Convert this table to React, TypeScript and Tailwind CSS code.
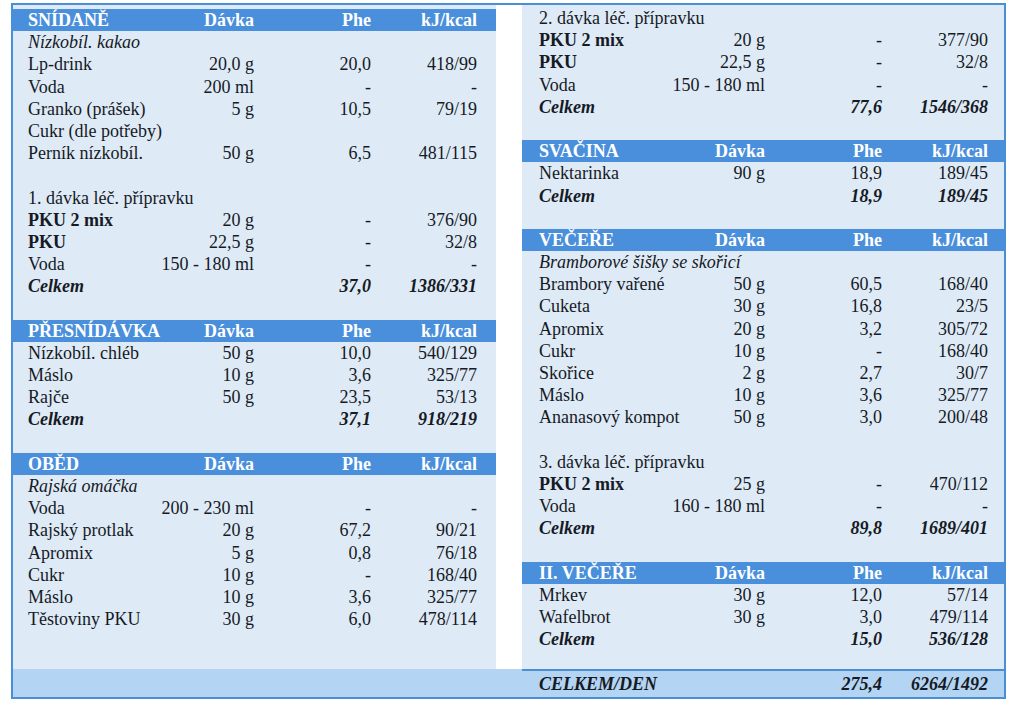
import React from "react";

type Row =
  | { t: "h"; name: string }
  | { t: "i"; name: string }
  | { t: "p"; name: string }
  | { t: "blank" }
  | { t: "n" | "b" | "c"; name: string; d?: string; p?: string; k?: string };

const left: Row[] = [
  { t: "h", name: "SNÍDANĚ" },
  { t: "i", name: "Nízkobíl. kakao" },
  { t: "n", name: "Lp-drink", d: "20,0 g", p: "20,0", k: "418/99" },
  { t: "n", name: "Voda", d: "200 ml", p: "-", k: "-" },
  { t: "n", name: "Granko (prášek)", d: "5 g", p: "10,5", k: "79/19" },
  { t: "p", name: "Cukr (dle potřeby)" },
  { t: "n", name: "Perník nízkobíl.", d: "50 g", p: "6,5", k: "481/115" },
  { t: "blank" },
  { t: "p", name: "1. dávka léč. přípravku" },
  { t: "b", name: "PKU 2 mix", d: "20 g", p: "-", k: "376/90" },
  { t: "b", name: "PKU", d: "22,5 g", p: "-", k: "32/8" },
  { t: "n", name: "Voda", d: "150 - 180 ml", p: "-", k: "-" },
  { t: "c", name: "Celkem", p: "37,0", k: "1386/331" },
  { t: "blank" },
  { t: "h", name: "PŘESNÍDÁVKA" },
  { t: "n", name: "Nízkobíl. chléb", d: "50 g", p: "10,0", k: "540/129" },
  { t: "n", name: "Máslo", d: "10 g", p: "3,6", k: "325/77" },
  { t: "n", name: "Rajče", d: "50 g", p: "23,5", k: "53/13" },
  { t: "c", name: "Celkem", p: "37,1", k: "918/219" },
  { t: "blank" },
  { t: "h", name: "OBĚD" },
  { t: "i", name: "Rajská omáčka" },
  { t: "n", name: "Voda", d: "200 - 230 ml", p: "-", k: "-" },
  { t: "n", name: "Rajský protlak", d: "20 g", p: "67,2", k: "90/21" },
  { t: "n", name: "Apromix", d: "5 g", p: "0,8", k: "76/18" },
  { t: "n", name: "Cukr", d: "10 g", p: "-", k: "168/40" },
  { t: "n", name: "Máslo", d: "10 g", p: "3,6", k: "325/77" },
  { t: "n", name: "Těstoviny PKU", d: "30 g", p: "6,0", k: "478/114" },
];

const right: Row[] = [
  { t: "p", name: "2. dávka léč. přípravku" },
  { t: "b", name: "PKU 2 mix", d: "20 g", p: "-", k: "377/90" },
  { t: "b", name: "PKU", d: "22,5 g", p: "-", k: "32/8" },
  { t: "n", name: "Voda", d: "150 - 180 ml", p: "-", k: "-" },
  { t: "c", name: "Celkem", p: "77,6", k: "1546/368" },
  { t: "blank" },
  { t: "h", name: "SVAČINA" },
  { t: "n", name: "Nektarinka", d: "90 g", p: "18,9", k: "189/45" },
  { t: "c", name: "Celkem", p: "18,9", k: "189/45" },
  { t: "blank" },
  { t: "h", name: "VEČEŘE" },
  { t: "i", name: "Bramborové šišky se skořicí" },
  { t: "n", name: "Brambory vařené", d: "50 g", p: "60,5", k: "168/40" },
  { t: "n", name: "Cuketa", d: "30 g", p: "16,8", k: "23/5" },
  { t: "n", name: "Apromix", d: "20 g", p: "3,2", k: "305/72" },
  { t: "n", name: "Cukr", d: "10 g", p: "-", k: "168/40" },
  { t: "n", name: "Skořice", d: "2 g", p: "2,7", k: "30/7" },
  { t: "n", name: "Máslo", d: "10 g", p: "3,6", k: "325/77" },
  { t: "n", name: "Ananasový kompot", d: "50 g", p: "3,0", k: "200/48" },
  { t: "blank" },
  { t: "p", name: "3. dávka léč. přípravku" },
  { t: "b", name: "PKU 2 mix", d: "25 g", p: "-", k: "470/112" },
  { t: "n", name: "Voda", d: "160 - 180 ml", p: "-", k: "-" },
  { t: "c", name: "Celkem", p: "89,8", k: "1689/401" },
  { t: "blank" },
  { t: "h", name: "II. VEČEŘE" },
  { t: "n", name: "Mrkev", d: "30 g", p: "12,0", k: "57/14" },
  { t: "n", name: "Wafelbrot", d: "30 g", p: "3,0", k: "479/114" },
  { t: "c", name: "Celkem", p: "15,0", k: "536/128" },
];

function TableRow({ row, side }: { row: Row; side: "l" | "r" }) {
  const pad = side === "l" ? "pl-[15px] pr-[19px]" : "pl-[17px] pr-[16px]";
  const base = `grid grid-cols-[126px_100px_117px_106px] items-center h-[22.2px] leading-[22.2px] whitespace-nowrap ${pad}`;
  if (row.t === "blank") return <div className="h-[22.2px]" />;
  if (row.t === "h")
    return (
      <div className={`${base} bg-[#4a8fdb] text-white font-bold`}>
        <div>{row.name}</div>
        <div className="text-right">Dávka</div>
        <div className="text-right">Phe</div>
        <div className="text-right">kJ/kcal</div>
      </div>
    );
  if (row.t === "i")
    return (
      <div className={base}>
        <div className="col-span-4 italic">{row.name}</div>
      </div>
    );
  if (row.t === "p")
    return (
      <div className={base}>
        <div className="col-span-4">{row.name}</div>
      </div>
    );
  const nameCls = row.t === "b" ? "font-bold" : row.t === "c" ? "font-bold italic" : "";
  const valCls = row.t === "c" ? "font-bold italic" : "";
  return (
    <div className={base}>
      <div className={nameCls}>{row.name}</div>
      <div className="text-right">{row.d ?? ""}</div>
      <div className={`text-right ${valCls}`}>{row.p ?? ""}</div>
      <div className={`text-right ${valCls}`}>{row.k ?? ""}</div>
    </div>
  );
}

export default function App() {
  return (
    <div className="w-[1024px] h-[706px] bg-white overflow-hidden pt-[3px] pl-[11px] text-[18px] text-[#151a24] [font-family:'Liberation_Serif','Times_New_Roman',serif]">
      <div className="w-[995px] border-2 border-[#4a8fd6] flex flex-col">
        <div className="flex h-[664px]">
          <div className="w-[483px] shrink-0 bg-[#dfeaf7] pt-[4px]">
            {left.map((r, i) => (
              <TableRow key={i} row={r} side="l" />
            ))}
          </div>
          <div className="w-[26px] shrink-0 bg-white" />
          <div className="w-[482px] shrink-0 bg-[#dfeaf7] pt-[2px]">
            {right.map((r, i) => (
              <TableRow key={i} row={r} side="r" />
            ))}
          </div>
        </div>
        <div className="flex h-[28px] bg-[#b4d4f3]">
          <div className="w-[509px] shrink-0" />
          <div className="w-[482px] shrink-0 border-t-2 border-[#4a8fd6] pl-[17px] pr-[16px] grid grid-cols-[126px_100px_117px_106px] items-center font-bold italic whitespace-nowrap">
            <div className="col-span-2">CELKEM/DEN</div>
            <div className="text-right">275,4</div>
            <div className="text-right">6264/1492</div>
          </div>
        </div>
      </div>
    </div>
  );
}
